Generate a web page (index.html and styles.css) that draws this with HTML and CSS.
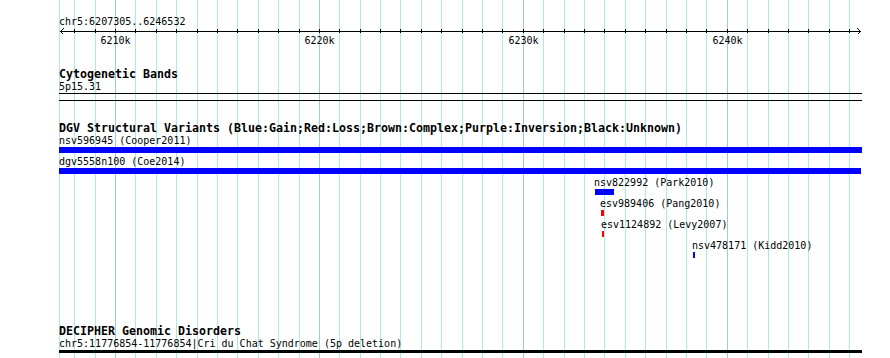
FILE: index.html
```html
<!DOCTYPE html>
<html lang="en">

<head>
    <meta charset="UTF-8">
    <meta name="viewport" content="width=device-width, initial-scale=1.0">
    <title>chr5:6207305..6246532</title>
    <link rel="stylesheet" href="styles.css">
</head>

<body>
    <div id="browser" class="browser">
        <div id="grid" class="grid"></div>

        <div class="ruler">
            <div class="ruler-title">chr5:6207305..6246532</div>
            <div id="axis" class="axis">
                <div class="axis-line"></div>
                <svg class="axis-arrows" width="803" height="7" viewBox="0 0 803 7">
                    <polyline points="4.5,0.5 1.5,3.5 4.5,6.5" />
                    <polyline points="798.5,0.5 801.5,3.5 798.5,6.5" />
                </svg>
            </div>
            <div id="tick_labels" class="tick-labels"></div>
        </div>

        <div class="track track-cyto">
            <div class="track-title">Cytogenetic Bands</div>
            <div class="label">5p15.31</div>
            <div class="band"></div>
        </div>

        <div class="track track-dgv">
            <div class="track-title">DGV Structural Variants (Blue:Gain;Red:Loss;Brown:Complex;Purple:Inversion;Black:Unknown)</div>
            <div class="feature">
                <div class="label">nsv596945 (Cooper2011)</div>
                <div class="glyph gain" style="width:803px"></div>
            </div>
            <div class="feature">
                <div class="label">dgv5558n100 (Coe2014)</div>
                <div class="glyph gain" style="width:802px"></div>
            </div>
            <div class="feature" style="padding-left:535px">
                <div class="label">nsv822992 (Park2010)</div>
                <div class="glyph gain" style="width:19px;margin-left:1px"></div>
            </div>
            <div class="feature" style="padding-left:541px">
                <div class="label">esv989406 (Pang2010)</div>
                <div class="glyph loss" style="width:3px;margin-left:1px"></div>
            </div>
            <div class="feature" style="padding-left:542px">
                <div class="label">esv1124892 (Levy2007)</div>
                <div class="glyph loss" style="width:2px;margin-left:1px"></div>
            </div>
            <div class="feature" style="padding-left:633px">
                <div class="label">nsv478171 (Kidd2010)</div>
                <div class="glyph gain" style="width:2px;margin-left:1px"></div>
            </div>
        </div>

        <div class="track track-decipher">
            <div class="track-title">DECIPHER Genomic Disorders</div>
            <div class="label">chr5:11776854-11776854|Cri du Chat Syndrome (5p deletion)</div>
            <div class="disorder"></div>
        </div>
    </div>

    <script>
        // 坐标换算：bp -> 面板内像素
        var start = 6207305;
        var end = 6246532;
        var scale = 800 / (end - start + 1);

        function toX(bp) {
            return Math.floor(1.5 + (bp - start) * scale);
        }

        var grid = document.getElementById('grid');
        var axis = document.getElementById('axis');
        var tickLabels = document.getElementById('tick_labels');

        // 面板左边的线
        var edge = document.createElement('div');
        edge.className = 'gridline';
        edge.style.left = '0px';
        grid.appendChild(edge);

        for (var kb = Math.ceil(start / 1000); kb * 1000 <= end; kb++) {
            var x = toX(kb * 1000);

            var line = document.createElement('div');
            line.className = kb % 10 == 0 ? 'gridline major' : 'gridline';
            line.style.left = x + 'px';
            grid.appendChild(line);

            var tick = document.createElement('div');
            tick.className = 'tick';
            tick.style.left = x + 'px';
            axis.appendChild(tick);

            if (kb % 10 == 0) {
                var span = document.createElement('span');
                span.className = 'tick-label';
                span.style.left = (x + 0.5) + 'px';
                span.textContent = kb + 'k';
                tickLabels.appendChild(span);
            }
        }
    </script>
</body>

</html>
```

FILE: styles.css
```css
* {
    margin: 0;
    padding: 0;
}

body {
    background: #fff;
    color: #000;
    font-family: "DejaVu Sans Mono", "Liberation Mono", monospace;
    font-size: 10px;
}

.browser {
    position: relative;
    width: 803px;
    height: 358px;
    margin-left: 59px;
    overflow: hidden;
}

/* 网格线 */
.grid {
    position: absolute;
    top: 0;
    left: 0;
    right: 0;
    bottom: 0;
}

.gridline {
    position: absolute;
    top: 0;
    bottom: 0;
    width: 1px;
    background: #aaeaea;
}

.gridline.major {
    background: #9acbe6;
}

/* 标尺 */
.ruler,
.track {
    position: relative;
    z-index: 1;
}

.ruler-title {
    padding-top: 15px;
    line-height: 13px;
}

.axis {
    position: relative;
    height: 6px;
}

.axis-line {
    position: absolute;
    left: 1px;
    right: 1px;
    top: 3px;
    height: 1px;
    background: #000;
}

.axis-arrows {
    position: absolute;
    left: 0;
    top: 0;
}

.axis-arrows polyline {
    fill: none;
    stroke: #000;
    stroke-width: 1;
    shape-rendering: crispEdges;
}

.tick {
    position: absolute;
    top: 1px;
    width: 1px;
    height: 4px;
    background: #000;
}

.tick-labels {
    position: relative;
    height: 13px;
    line-height: 13px;
}

.tick-label {
    position: absolute;
    top: 0;
    transform: translateX(-50%);
    white-space: nowrap;
}

/* 轨道 */
.track-title {
    font-weight: bold;
    font-size: 11.63px;
    line-height: 12px;
    white-space: nowrap;
}

.label {
    line-height: 13px;
    white-space: nowrap;
}

.track-cyto {
    margin-top: 21px;
}

.band {
    height: 6px;
    border-top: 1px solid #000;
    border-bottom: 1px solid #000;
}

.track-dgv {
    margin-top: 21px;
}

.feature {
    height: 21px;
}

.feature .glyph {
    height: 6px;
}

.feature .gain {
    background: #0000ff;
}

.feature .loss {
    background: #ff0000;
}

.track-decipher {
    margin-top: 65px;
}

.disorder {
    height: 3px;
    background: #000;
}
```
